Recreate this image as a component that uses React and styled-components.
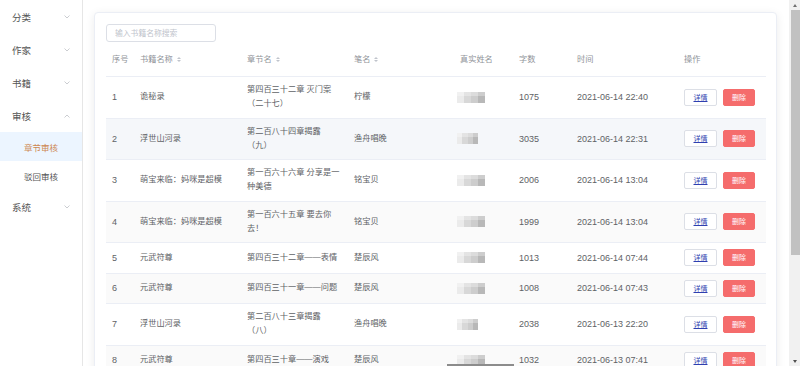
import React from "react";
import styled, { createGlobalStyle } from "styled-components";

const GlobalStyle = createGlobalStyle`
  html, body {
    margin: 0;
    padding: 0;
    background: #fff;
    overflow: hidden;
  }
  body {
    font-family: "Liberation Sans", "Noto Sans CJK SC", sans-serif;
    color: #606266;
    text-spacing-trim: space-all;
  }
`;

const menu = [
  { label: "分类" },
  { label: "作家" },
  { label: "书籍" },
  {
    label: "审核",
    open: true,
    children: [
      { label: "章节审核", active: true },
      { label: "驳回审核" },
    ],
  },
  { label: "系统" },
];

const rows = [
  { book: "诡秘录", chapter: "第四百三十二章 灭门案（二十七）", pen: "柠檬", blur: 28, words: 1075, time: "2021-06-14 22:40" },
  { book: "浮世山河录", chapter: "第二百八十四章揭露（九）", pen: "渔舟唱晚", blur: 21, words: 3035, time: "2021-06-14 22:31", hover: true },
  { book: "萌宝来临：妈咪是超模", chapter: "第一百六十六章 分享是一种美德", pen: "铭宝贝", blur: 28, words: 2006, time: "2021-06-14 13:04" },
  { book: "萌宝来临：妈咪是超模", chapter: "第一百六十五章 要去你去！", pen: "铭宝贝", blur: 28, words: 1999, time: "2021-06-14 13:04" },
  { book: "元武符尊", chapter: "第四百三十二章——表情", pen: "楚辰风", blur: 28, words: 1013, time: "2021-06-14 07:44" },
  { book: "元武符尊", chapter: "第四百三十一章——问题", pen: "楚辰风", blur: 28, words: 1008, time: "2021-06-14 07:43" },
  { book: "浮世山河录", chapter: "第二百八十三章揭露（八）", pen: "渔舟唱晚", blur: 21, words: 2038, time: "2021-06-13 22:20" },
  { book: "元武符尊", chapter: "第四百三十章——演戏", pen: "楚辰风", blur: 28, words: 1032, time: "2021-06-13 07:41", bar: true },
];

const columns = [
  { title: "序号", width: 28 },
  { title: "书籍名称", width: 107, sort: true },
  { title: "章节名", width: 107, sort: true },
  { title: "笔名", width: 106, sort: true },
  { title: "真实姓名", width: 59 },
  { title: "字数", width: 58 },
  { title: "时间", width: 107 },
  { title: "操作", width: 88 },
];

function Chevron({ up }) {
  return (
    <ChevronIcon viewBox="0 0 6 4" $up={up}>
      <polyline points="0.5,0.5 3,3 5.5,0.5" fill="none" stroke="#b4b7bd" strokeWidth="0.7" />
    </ChevronIcon>
  );
}

function Sidebar() {
  return (
    <Side>
      {menu.map((item) => (
        <div key={item.label}>
          <MenuItem>
            {item.label}
            <Chevron up={item.open} />
          </MenuItem>
          {item.children &&
            item.children.map((sub) => (
              <SubItem key={sub.label} $active={sub.active}>
                {sub.label}
              </SubItem>
            ))}
        </div>
      ))}
    </Side>
  );
}

function ScrollBar() {
  return (
    <Rail>
      <Arrow $dir="up" />
      <Thumb />
      <RailFill />
      <Arrow $dir="down" />
    </Rail>
  );
}

function App() {
  return (
    <>
      <GlobalStyle />
      <Window>
        <Viewport>
          <Sidebar />
          <Main>
            <Card>
              <Search placeholder="输入书籍名称搜索" />
              <Table>
                <colgroup>
                  {columns.map((c) => (
                    <col key={c.title} style={{ width: c.width }} />
                  ))}
                </colgroup>
                <thead>
                  <tr>
                    {columns.map((c) => (
                      <Th key={c.title}>
                        {c.title}
                        {c.sort && <Sorter />}
                      </Th>
                    ))}
                  </tr>
                </thead>
                <tbody>
                  {rows.map((r, i) => (
                    <Row key={i} $stripe={i % 2 === 1} $hover={r.hover}>
                      <Td $num>{i + 1}</Td>
                      <Td>{r.book}</Td>
                      <Td>{r.chapter}</Td>
                      <Td>{r.pen}</Td>
                      <Td>
                        <Mosaic $w={r.blur} $bar={r.bar} />
                      </Td>
                      <Td $num>{r.words}</Td>
                      <Td $num>{r.time}</Td>
                      <Td>
                        <Actions>
                          <DetailButton>详情</DetailButton>
                          <DeleteButton>删除</DeleteButton>
                        </Actions>
                      </Td>
                    </Row>
                  ))}
                </tbody>
              </Table>
            </Card>
          </Main>
        </Viewport>
        <ScrollBar />
      </Window>
    </>
  );
}

const Window = styled.div`
  display: flex;
  height: 100vh;
  overflow: hidden;
`;

const Viewport = styled.div`
  flex: 1;
  min-width: 0;
  display: flex;
  overflow: hidden;
`;

const Rail = styled.div`
  width: 11px;
  flex: none;
  display: flex;
  flex-direction: column;
  background: #f1f1f1;
`;

const Arrow = styled.div`
  height: 10px;
  flex: none;
  display: flex;
  align-items: center;
  justify-content: center;
  padding-left: 1px;

  &::before {
    content: "";
    width: 0;
    height: 0;
    border-left: 2.5px solid transparent;
    border-right: 2.5px solid transparent;
    ${(p) =>
      p.$dir === "up"
        ? "border-bottom: 3px solid #707070;"
        : "border-top: 3px solid #505050;"}
  }
`;

const Thumb = styled.div`
  height: 245px;
  margin-left: 2px;
  background: #c1c1c1;
`;

const RailFill = styled.div`
  flex: 1;
`;

const Side = styled.nav`
  width: 82px;
  flex: none;
  border-right: 1px solid #e6e6e6;
  background: #fff;
`;

const MenuItem = styled.div`
  height: 33px;
  display: flex;
  align-items: center;
  justify-content: space-between;
  padding: 0 12px 0 12px;
  font-size: 9.5px;
  color: #555;
`;

const ChevronIcon = styled.svg`
  width: 6px;
  height: 4px;
  transform: ${(p) => (p.$up ? "rotate(180deg)" : "none")};
`;

const SubItem = styled.div`
  height: 29px;
  display: flex;
  align-items: center;
  padding-left: 24px;
  font-size: 8.5px;
  color: ${(p) => (p.$active ? "#cc8650" : "#555")};
  background: ${(p) => (p.$active ? "#ecf5ff" : "transparent")};
`;

const Main = styled.main`
  flex: 1;
  min-width: 0;
  padding: 12px 12px 12px 11px;
`;

const Card = styled.section`
  background: #fff;
  border: 1px solid #ebeef5;
  border-radius: 4px;
  box-shadow: 0 2px 10px rgba(0, 0, 0, 0.08);
  padding: 11px 10px 14px 11px;
`;

const Search = styled.input`
  display: block;
  box-sizing: border-box;
  width: 110px;
  height: 18px;
  border: 1px solid #dcdfe6;
  border-radius: 3px;
  padding: 0 8px;
  font-family: inherit;
  font-size: 7.8px;
  color: #606266;
  outline: none;

  &::placeholder {
    color: #c0c4cc;
  }
`;

const Table = styled.table`
  width: 660px;
  table-layout: fixed;
  border-collapse: collapse;
  font-size: 8.2px;
  line-height: 14px;
`;

const Th = styled.th`
  text-align: left;
  font-weight: normal;
  color: #909399;
  padding: 11px 6px 9px;
  border-bottom: 1px solid #ebeef5;
  white-space: nowrap;
`;

const Sorter = styled.span`
  display: inline-flex;
  flex-direction: column;
  gap: 1px;
  margin-left: 4px;
  vertical-align: middle;

  &::before,
  &::after {
    content: "";
    width: 0;
    height: 0;
    border-left: 2px solid transparent;
    border-right: 2px solid transparent;
  }
  &::before {
    border-bottom: 2.5px solid #c0c4cc;
  }
  &::after {
    border-top: 2.5px solid #c0c4cc;
  }
`;

const Row = styled.tr`
  background: ${(p) => (p.$hover ? "#f5f7fa" : p.$stripe ? "#fafafa" : "#fff")};
`;

const Td = styled.td`
  padding: 6px 6px 6.5px;
  border-bottom: 1px solid #ebeef5;
  vertical-align: middle;
  color: #606266;
  font-size: ${(p) => (p.$num ? "9px" : "8.2px")};
`;

const Mosaic = styled.div`
  position: relative;
  width: ${(p) => p.$w}px;
  height: 11px;
  margin-left: -3px;
  background:
    linear-gradient(180deg, rgba(255, 255, 255, 0.3) 0 40%, transparent 40%),
    linear-gradient(90deg, #ebebeb 0 25%, #d8d8d8 25% 50%, #cdcdcd 50% 75%, #b8b8b8 75%);

  &::after {
    content: "";
    display: ${(p) => (p.$bar ? "block" : "none")};
    position: absolute;
    left: -10px;
    top: 9px;
    width: 67px;
    height: 4px;
    background: #8c8c8c;
  }
`;

const Actions = styled.div`
  display: flex;
  gap: 6px;
`;

const BaseButton = styled.button`
  box-sizing: border-box;
  height: 17px;
  padding: 0;
  border-radius: 2px;
  font-family: inherit;
  font-size: 7px;
  line-height: 15px;
  cursor: pointer;
`;

const DetailButton = styled(BaseButton)`
  width: 33px;
  background: #fff;
  border: 1px solid #dcdfe6;
  color: #2f3fb0;
  text-decoration: underline;
`;

const DeleteButton = styled(BaseButton)`
  width: 32px;
  background: #f56c6c;
  border: 1px solid #f56c6c;
  color: #fff;
`;

export default App;
